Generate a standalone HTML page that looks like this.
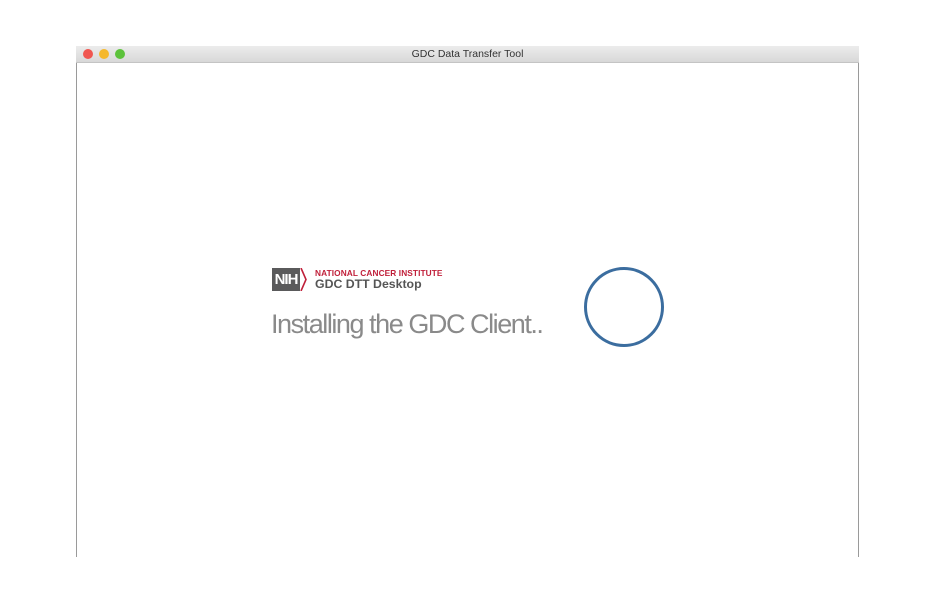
<!DOCTYPE html>
<html><head><meta charset="utf-8"><style>
html,body{margin:0;padding:0;background:#fff;width:942px;height:616px;overflow:hidden;position:relative;font-family:"Liberation Sans",sans-serif}
.win{position:absolute;left:76px;top:46px;width:783px;height:511px;border-left:1px solid #9a9a9a;border-right:1px solid #9a9a9a;box-sizing:border-box}
.bar{position:absolute;left:76px;top:46px;width:783px;height:17px;background:linear-gradient(#ececec,#d8d8d8);border-bottom:1px solid #c4c4c4;box-sizing:border-box}
.bar .t{position:absolute;left:0;right:0;top:2px;text-align:center;font-size:10.5px;color:#333}
.dot{position:absolute;top:3px;width:10px;height:10px;border-radius:50%}
.logo{position:absolute;left:272px;top:268px;width:28px;height:23px;background:#5a5a5b;color:#fff;font-weight:bold;font-size:15px;line-height:23px;text-align:center;letter-spacing:-1px}
.n1{position:absolute;left:315px;top:268px;font-size:8.3px;font-weight:bold;color:#c0203a;letter-spacing:0.1px}
.n2{position:absolute;left:315px;top:277px;font-size:12.3px;font-weight:bold;color:#555}
.inst{position:absolute;left:271px;top:309px;font-size:27px;color:#8a8a8a;letter-spacing:-1.45px}
</style></head><body>
<div class="win"></div>
<div class="bar"><span class="t">GDC Data Transfer Tool</span>
<span class="dot" style="left:7px;background:#f05650"></span>
<span class="dot" style="left:23px;background:#f5b82c"></span>
<span class="dot" style="left:39px;background:#5cc23b"></span></div>
<div class="logo">NIH</div>
<svg style="position:absolute;left:300px;top:268px" width="8" height="23"><path d="M1 0 L6 11.5 L1 23" fill="none" stroke="#c0203a" stroke-width="1.6"/></svg>
<div class="n1">NATIONAL CANCER INSTITUTE</div>
<div class="n2">GDC DTT Desktop</div>
<div class="inst">Installing the GDC Client..</div>
<svg style="position:absolute;left:582px;top:265px" width="84" height="84"><circle cx="42" cy="42" r="38.5" fill="none" stroke="#3b6d9f" stroke-width="3"/></svg>
</body></html>
